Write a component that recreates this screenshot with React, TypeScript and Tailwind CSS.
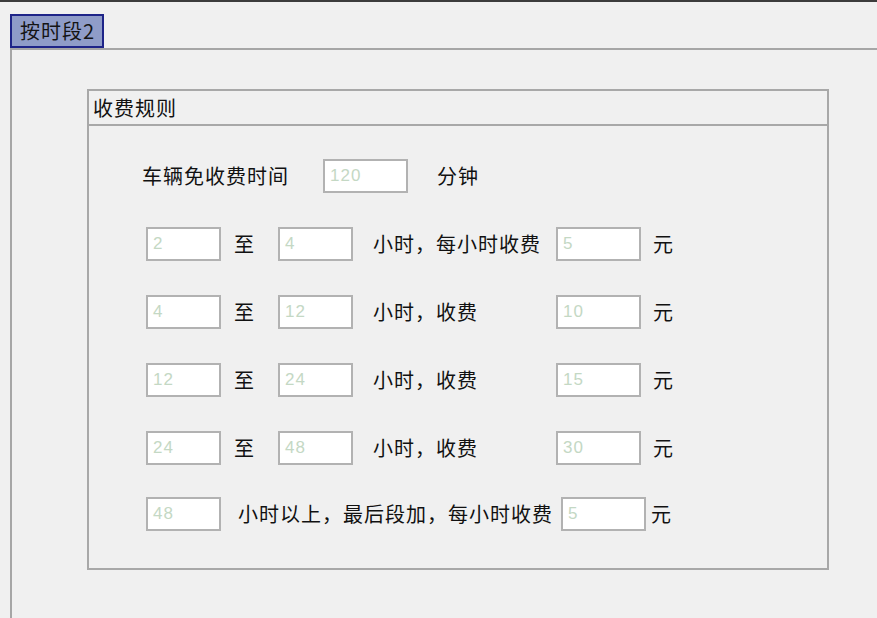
import React from 'react';

const font = { fontFamily: '"Noto Sans CJK SC", "Noto Sans", sans-serif' };

function Field({ value, w = 'w-[75px]' }: { value: string; w?: string }) {
  return (
    <div
      className={`${w} h-[34px] shrink-0 border-2 border-[#b2b2b2] bg-white pl-[5px] flex items-center text-[17px] text-[#c4d8c4]`}
      style={{ fontFamily: '"Liberation Sans", Arial, sans-serif' }}
    >
      {value}
    </div>
  );
}

const ranges = [
  { from: '2', to: '4', label: '小时，每小时收费', fee: '5' },
  { from: '4', to: '12', label: '小时，收费', fee: '10' },
  { from: '12', to: '24', label: '小时，收费', fee: '15' },
  { from: '24', to: '48', label: '小时，收费', fee: '30' },
];

export default function App() {
  return (
    <div
      className="w-[877px] h-[618px] overflow-hidden bg-[#f0f0f0] border-t-2 border-[#3c3c3c] flex flex-col text-[20px] tracking-[1px] text-[#111]"
      style={font}
    >
      {/* tab strip */}
      <div className="pl-[10px] pt-[12px] flex">
        <div className="h-[34px] w-[94px] border-2 border-[#1e2488] bg-[#8f9cc8] flex items-center pl-[8px] leading-none text-[#141414]">
          按时段2
        </div>
      </div>

      {/* tab page */}
      <div className="ml-[10px] flex-1 border-t-2 border-l-2 border-[#a6a6a6] pl-[75px] pt-[39px]">
        <div className="w-[742px] h-[481px] border-2 border-[#a8a8a8] flex flex-col">
          <div className="h-[35px] border-b-2 border-[#a8a8a8] flex items-center pl-[4px]">收费规则</div>

          <div className="flex flex-col pt-[33px]">
            <div className="h-[34px] flex items-center pl-[53px]">
              <span className="w-[181px] shrink-0">车辆免收费时间</span>
              <Field value="120" w="w-[85px]" />
              <span className="ml-[29px]">分钟</span>
            </div>

            {ranges.map((r) => (
              <div key={r.from} className="h-[34px] mt-[34px] flex items-center pl-[57px]">
                <Field value={r.from} />
                <span className="ml-[13px] w-[44px] shrink-0">至</span>
                <Field value={r.to} />
                <span className="ml-[20px] w-[183px] shrink-0 whitespace-nowrap">{r.label}</span>
                <Field value={r.fee} w="w-[85px]" />
                <span className="ml-[12px]">元</span>
              </div>
            ))}

            <div className="h-[34px] mt-[32px] flex items-center pl-[57px]">
              <Field value="48" />
              <span className="ml-[17px] w-[323px] shrink-0 whitespace-nowrap">小时以上，最后段加，每小时收费</span>
              <Field value="5" w="w-[85px]" />
              <span className="ml-[5px]">元</span>
            </div>
          </div>
        </div>
      </div>
    </div>
  );
}
